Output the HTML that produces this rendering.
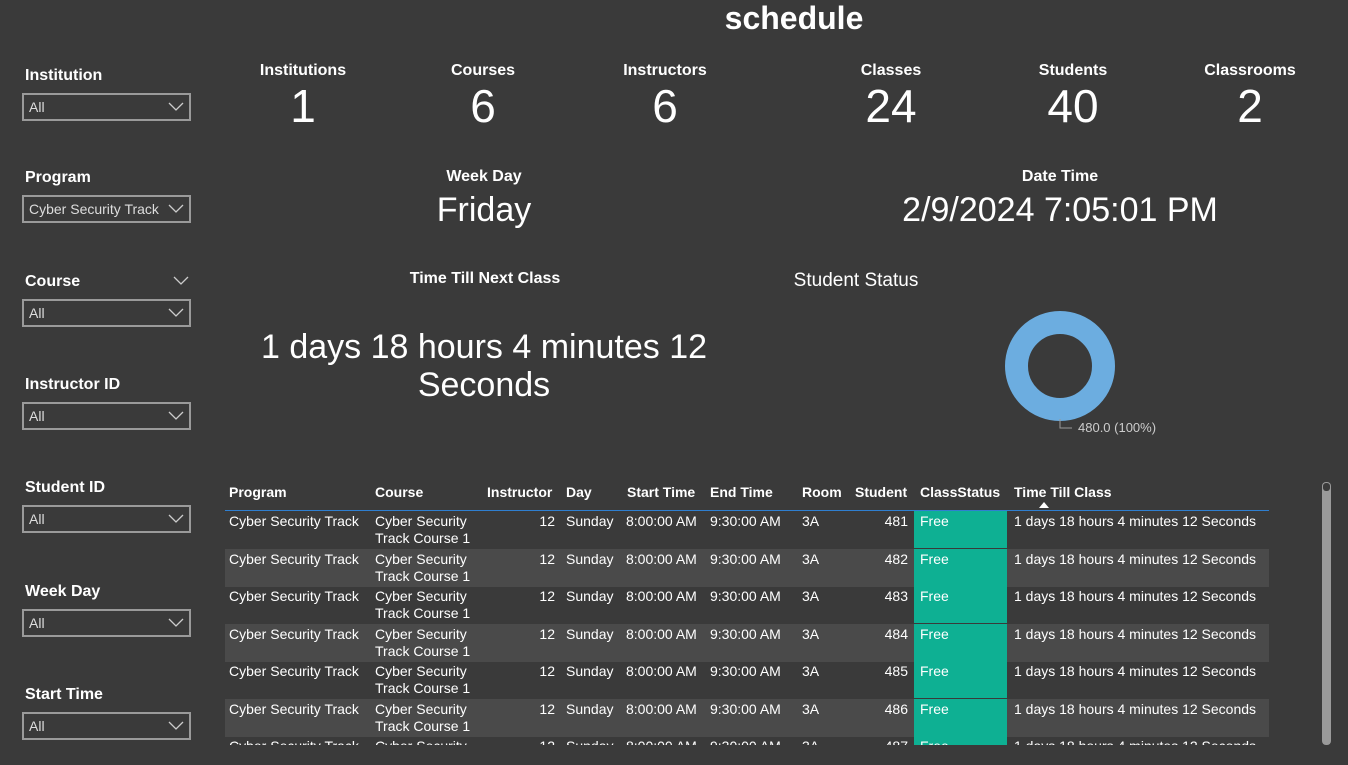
<!DOCTYPE html>
<html><head><meta charset="utf-8"><style>
body{margin:0;width:1348px;height:765px;background:#3a3a3a;overflow:hidden;font-family:"Liberation Sans",Arial,sans-serif;color:#fff;position:relative}
.a{position:absolute}
.lbl{position:absolute;left:25px;font-weight:bold;font-size:16px}
.dd{position:absolute;left:22px;width:165px;height:24px;border:2px solid #9a9a9a;box-sizing:content-box;font-size:14px;color:#ddd}
.dd span{position:absolute;left:5px;top:4px}
.dd svg{position:absolute;right:5px;top:7px}
.kt{position:absolute;font-weight:bold;font-size:16px;text-align:center;width:200px}
.kv{position:absolute;font-size:46px;text-align:center;width:200px}
.tbl{position:absolute;left:225px;top:476px;width:1044px;height:269px;overflow:hidden;font-size:14px}
.h{position:absolute;top:8px;font-weight:bold}
.row{position:absolute;left:0;width:1044px;height:38px}
.row div{position:absolute;top:2px;line-height:17px}
.r{text-align:right}
</style></head><body>
<div class="a" style="left:0;width:1588px;top:0;text-align:center;font-size:32px;font-weight:bold;top:0px">schedule</div>

<div class="lbl" style="top:67px">Institution</div>
<div class="dd" style="top:93px"><span>All</span><svg width="16" height="10"><path d="M1 1 L8 8 L15 1" stroke="#ccc" fill="none" stroke-width="1.3"/></svg></div>
<div class="lbl" style="top:169px">Program</div>
<div class="dd" style="top:195px"><span>Cyber Security Track</span><svg width="16" height="10"><path d="M1 1 L8 8 L15 1" stroke="#ccc" fill="none" stroke-width="1.3"/></svg></div>
<div class="lbl" style="top:273px">Course</div>
<svg class="a" style="left:173px;top:276px" width="16" height="10"><path d="M1 1 L8 8 L15 1" stroke="#ccc" fill="none" stroke-width="1.3"/></svg>
<div class="dd" style="top:299px"><span>All</span><svg width="16" height="10"><path d="M1 1 L8 8 L15 1" stroke="#ccc" fill="none" stroke-width="1.3"/></svg></div>
<div class="lbl" style="top:376px">Instructor ID</div>
<div class="dd" style="top:402px"><span>All</span><svg width="16" height="10"><path d="M1 1 L8 8 L15 1" stroke="#ccc" fill="none" stroke-width="1.3"/></svg></div>
<div class="lbl" style="top:479px">Student ID</div>
<div class="dd" style="top:505px"><span>All</span><svg width="16" height="10"><path d="M1 1 L8 8 L15 1" stroke="#ccc" fill="none" stroke-width="1.3"/></svg></div>
<div class="lbl" style="top:583px">Week Day</div>
<div class="dd" style="top:609px"><span>All</span><svg width="16" height="10"><path d="M1 1 L8 8 L15 1" stroke="#ccc" fill="none" stroke-width="1.3"/></svg></div>
<div class="lbl" style="top:686px">Start Time</div>
<div class="dd" style="top:712px"><span>All</span><svg width="16" height="10"><path d="M1 1 L8 8 L15 1" stroke="#ccc" fill="none" stroke-width="1.3"/></svg></div>

<div class="kt" style="left:203px;top:62px">Institutions</div><div class="kv" style="left:203px;top:79px">1</div>
<div class="kt" style="left:383px;top:62px">Courses</div><div class="kv" style="left:383px;top:79px">6</div>
<div class="kt" style="left:565px;top:62px">Instructors</div><div class="kv" style="left:565px;top:79px">6</div>
<div class="kt" style="left:791px;top:62px">Classes</div><div class="kv" style="left:791px;top:79px">24</div>
<div class="kt" style="left:973px;top:62px">Students</div><div class="kv" style="left:973px;top:79px">40</div>
<div class="kt" style="left:1150px;top:62px">Classrooms</div><div class="kv" style="left:1150px;top:79px">2</div>

<div class="kt" style="left:384px;top:168px">Week Day</div>
<div class="a" style="left:284px;width:400px;text-align:center;top:191px;font-size:34px">Friday</div>
<div class="kt" style="left:960px;top:168px">Date Time</div>
<div class="a" style="left:810px;width:500px;text-align:center;top:191px;font-size:34px">2/9/2024 7:05:01 PM</div>

<div class="kt" style="left:385px;top:270px">Time Till Next Class</div>
<div class="a" style="left:230px;width:508px;text-align:center;top:328px;font-size:34px;line-height:38px">1 days 18 hours 4 minutes 12<br>Seconds</div>

<div class="a" style="left:756px;width:200px;text-align:center;top:270px;font-size:19px">Student Status</div>
<svg class="a" style="left:1000px;top:306px" width="170" height="130">
<circle cx="60" cy="60" r="43.5" fill="none" stroke="#6cade0" stroke-width="23"/>
<path d="M60 113 V122 H72" stroke="#999" fill="none"/>
<text x="78" y="126" fill="#ccc" font-size="13" font-family="Liberation Sans">480.0 (100%)</text>
</svg>

<div class="tbl">
<div class="h" style="left:4px">Program</div>
<div class="h" style="left:150px">Course</div>
<div class="h" style="left:262px">Instructor</div>
<div class="h" style="left:341px">Day</div>
<div class="h" style="left:402px">Start Time</div>
<div class="h" style="left:485px">End Time</div>
<div class="h" style="left:577px">Room</div>
<div class="h" style="left:630px">Student</div>
<div class="h" style="left:695px">ClassStatus</div>
<div class="h" style="left:789px">Time Till Class</div>
<svg class="a" style="left:814px;top:26px" width="10" height="6"><path d="M0 6 L5 0 L10 6Z" fill="#fff"/></svg>
<div class="a" style="left:0;top:34px;width:1044px;height:1px;background:#2f7fd0"></div>

<div class="row" style="top:35px"><div style="left:4px">Cyber Security Track</div><div style="left:150px">Cyber Security<br>Track Course 1</div><div class="r" style="left:280px;width:50px">12</div><div style="left:341px">Sunday</div><div style="left:401px">8:00:00 AM</div><div style="left:485px">9:30:00 AM</div><div style="left:577px">3A</div><div class="r" style="left:630px;width:53px">481</div><div style="left:689px;top:0;width:93px;height:37px;background:#0eb093"></div><div style="left:695px">Free</div><div style="left:789px">1 days 18 hours 4 minutes 12 Seconds</div></div>
<div class="row" style="top:73px;background:#4a4a4a"><div style="left:4px">Cyber Security Track</div><div style="left:150px">Cyber Security<br>Track Course 1</div><div class="r" style="left:280px;width:50px">12</div><div style="left:341px">Sunday</div><div style="left:401px">8:00:00 AM</div><div style="left:485px">9:30:00 AM</div><div style="left:577px">3A</div><div class="r" style="left:630px;width:53px">482</div><div style="left:689px;top:0;width:93px;height:37px;background:#0eb093"></div><div style="left:695px">Free</div><div style="left:789px">1 days 18 hours 4 minutes 12 Seconds</div></div>
<div class="row" style="top:110px"><div style="left:4px">Cyber Security Track</div><div style="left:150px">Cyber Security<br>Track Course 1</div><div class="r" style="left:280px;width:50px">12</div><div style="left:341px">Sunday</div><div style="left:401px">8:00:00 AM</div><div style="left:485px">9:30:00 AM</div><div style="left:577px">3A</div><div class="r" style="left:630px;width:53px">483</div><div style="left:689px;top:0;width:93px;height:37px;background:#0eb093"></div><div style="left:695px">Free</div><div style="left:789px">1 days 18 hours 4 minutes 12 Seconds</div></div>
<div class="row" style="top:148px;background:#4a4a4a"><div style="left:4px">Cyber Security Track</div><div style="left:150px">Cyber Security<br>Track Course 1</div><div class="r" style="left:280px;width:50px">12</div><div style="left:341px">Sunday</div><div style="left:401px">8:00:00 AM</div><div style="left:485px">9:30:00 AM</div><div style="left:577px">3A</div><div class="r" style="left:630px;width:53px">484</div><div style="left:689px;top:0;width:93px;height:37px;background:#0eb093"></div><div style="left:695px">Free</div><div style="left:789px">1 days 18 hours 4 minutes 12 Seconds</div></div>
<div class="row" style="top:185px"><div style="left:4px">Cyber Security Track</div><div style="left:150px">Cyber Security<br>Track Course 1</div><div class="r" style="left:280px;width:50px">12</div><div style="left:341px">Sunday</div><div style="left:401px">8:00:00 AM</div><div style="left:485px">9:30:00 AM</div><div style="left:577px">3A</div><div class="r" style="left:630px;width:53px">485</div><div style="left:689px;top:0;width:93px;height:37px;background:#0eb093"></div><div style="left:695px">Free</div><div style="left:789px">1 days 18 hours 4 minutes 12 Seconds</div></div>
<div class="row" style="top:223px;background:#4a4a4a"><div style="left:4px">Cyber Security Track</div><div style="left:150px">Cyber Security<br>Track Course 1</div><div class="r" style="left:280px;width:50px">12</div><div style="left:341px">Sunday</div><div style="left:401px">8:00:00 AM</div><div style="left:485px">9:30:00 AM</div><div style="left:577px">3A</div><div class="r" style="left:630px;width:53px">486</div><div style="left:689px;top:0;width:93px;height:37px;background:#0eb093"></div><div style="left:695px">Free</div><div style="left:789px">1 days 18 hours 4 minutes 12 Seconds</div></div>
<div class="row" style="top:260px"><div style="left:4px">Cyber Security Track</div><div style="left:150px">Cyber Security<br>Track Course 1</div><div class="r" style="left:280px;width:50px">12</div><div style="left:341px">Sunday</div><div style="left:401px">8:00:00 AM</div><div style="left:485px">9:30:00 AM</div><div style="left:577px">3A</div><div class="r" style="left:630px;width:53px">487</div><div style="left:689px;top:0;width:93px;height:37px;background:#0eb093"></div><div style="left:695px">Free</div><div style="left:789px">1 days 18 hours 4 minutes 12 Seconds</div></div>
</div>

<div class="a" style="left:1322px;top:482px;width:9px;height:263px;background:#9a9a9a;border-radius:4px"></div>
<div class="a" style="left:1323px;top:483px;width:7px;height:8px;background:#3a3a3a;border-radius:3px"></div>
</body></html>
